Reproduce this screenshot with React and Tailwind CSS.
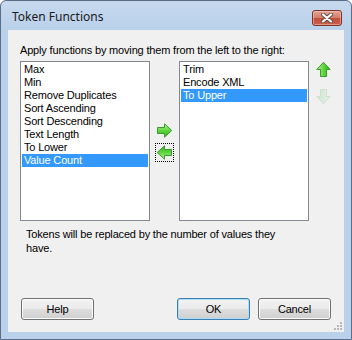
import React from 'react';

const leftItems = ['Max', 'Min', 'Remove Duplicates', 'Sort Ascending', 'Sort Descending', 'Text Length', 'To Lower', 'Value Count'];
const rightItems = ['Trim', 'Encode XML', 'To Upper'];

const ListBox = ({ items, selected }) => (
  <div className="w-[130px] h-[160px] shrink-0 border border-[#828790] bg-white p-px">
    {items.map((it) => (
      <div
        key={it}
        className={`h-[13px] leading-[13px] pl-[2px] whitespace-nowrap ${it === selected ? 'bg-[#3399ff] text-white' : 'text-black'}`}
      >
        {it}
      </div>
    ))}
  </div>
);

// green arrow, drawn pointing right, rotated for the other directions
const Arrow = ({ rotate = 0, disabled = false, id }) => (
  <svg width="17" height="15" viewBox="0 0 17 15" style={{ transform: `rotate(${rotate}deg)` }}>
    <defs>
      <linearGradient id={id} x1="0" y1="0" x2="0" y2="1">
        <stop offset="0" stopColor={disabled ? '#e6f2e6' : '#b8f59a'} />
        <stop offset="0.5" stopColor={disabled ? '#d9ecd9' : '#5fd63f'} />
        <stop offset="1" stopColor={disabled ? '#d0e6d0' : '#2fae1d'} />
      </linearGradient>
    </defs>
    <path
      d="M1.5 4.5 H8.5 V0.8 L15.8 7.5 L8.5 14.2 V10.5 H1.5 Z"
      fill={`url(#${id})`}
      stroke={disabled ? '#cfe0cf' : '#3b9b2b'}
      strokeWidth="1"
      strokeLinejoin="round"
    />
  </svg>
);

const Button = ({ label, primary }) => (
  <div
    className={`w-[73px] h-[22px] rounded-[3px] border flex items-center justify-center text-black bg-[linear-gradient(#f2f2f2_0%,#ebebeb_50%,#dddddd_51%,#cfcfcf_100%)] ${
      primary ? 'border-[#3c7fb1] shadow-[inset_0_0_0_1px_#a9def8]' : 'border-[#707070] shadow-[inset_0_0_0_1px_#fcfcfc]'
    }`}
  >
    {label}
  </div>
);

const Grip = () => (
  <div className="absolute right-[2px] bottom-[2px] grid grid-cols-3 gap-px w-[8px] h-[8px]">
    {[0, 0, 1, 0, 1, 1, 1, 1, 1].map((d, i) => (
      <div key={i} className={`w-[2px] h-[2px] ${d ? 'bg-[#b8b8b8]' : ''}`} />
    ))}
  </div>
);

export default function App() {
  return (
    <div className="w-[352px] h-[340px] flex flex-col rounded-t-[6px] border border-[#5a6e88] bg-[linear-gradient(#c6d8ee,#b9d1ea_30px,#b9d1ea)] font-['Liberation_Sans',Arial,sans-serif] text-[11px] tracking-[-0.17px] overflow-hidden">
      {/* title bar */}
      <div className="h-[29px] shrink-0 flex items-start justify-between pl-[11px] pr-[9px]">
        <div className="pt-[8px] leading-[16px] text-[12px] tracking-normal text-[#1a1a1a] font-['Noto_Sans',sans-serif]">Token Functions</div>
        <div className="mt-[9px] w-[30px] h-[16px] rounded-[3px] border border-[#7d3127] bg-[linear-gradient(#e3a494,#d27d6a_50%,#c24e3a_51%,#c8604c)] shadow-[inset_0_0_0_1px_rgba(255,220,210,0.45)] flex items-center justify-center">
          <svg width="12" height="10" viewBox="0 0 12 10">
            <path d="M2 1.5 L10 8.5 M10 1.5 L2 8.5" stroke="#5b4a48" strokeWidth="4" strokeLinecap="round" />
            <path d="M2 1.5 L10 8.5 M10 1.5 L2 8.5" stroke="#ffffff" strokeWidth="2.2" strokeLinecap="round" />
          </svg>
        </div>
      </div>

      {/* client area */}
      <div className="relative flex-1 mx-[7px] mb-[7px] bg-[#f0f0f0] flex flex-col">
        <div className="pt-[14px] pl-[12px] leading-[13px] text-black">
          Apply functions by moving them from the left to the right:
        </div>

        <div className="mt-[4px] ml-[12px] flex">
          <ListBox items={leftItems} selected="Value Count" />
          <div className="w-[29px] flex flex-col items-center justify-center gap-[3px]">
            <div className="w-[19px] h-[19px] flex items-center justify-center">
              <Arrow id="g-right" />
            </div>
            <div className="w-[19px] h-[19px] flex items-center justify-center border border-dotted border-black">
              <Arrow id="g-left" rotate={180} />
            </div>
          </div>
          <ListBox items={rightItems} selected="To Upper" />
          <div className="ml-[6px] pt-px flex flex-col gap-[12px]">
            <Arrow id="g-up" rotate={-90} />
            <Arrow id="g-down" rotate={90} disabled />
          </div>
        </div>

        <div className="mt-[6px] ml-[18px] leading-[14px] text-black">
          Tokens will be replaced by the number of values they
          <br />
          have.
        </div>

        <div className="mt-auto mb-[12px] px-[13px] flex items-center">
          <Button label="Help" />
          <div className="flex-1" />
          <Button label="OK" primary />
          <div className="w-[8px]" />
          <Button label="Cancel" />
        </div>

        <Grip />
      </div>
    </div>
  );
}
